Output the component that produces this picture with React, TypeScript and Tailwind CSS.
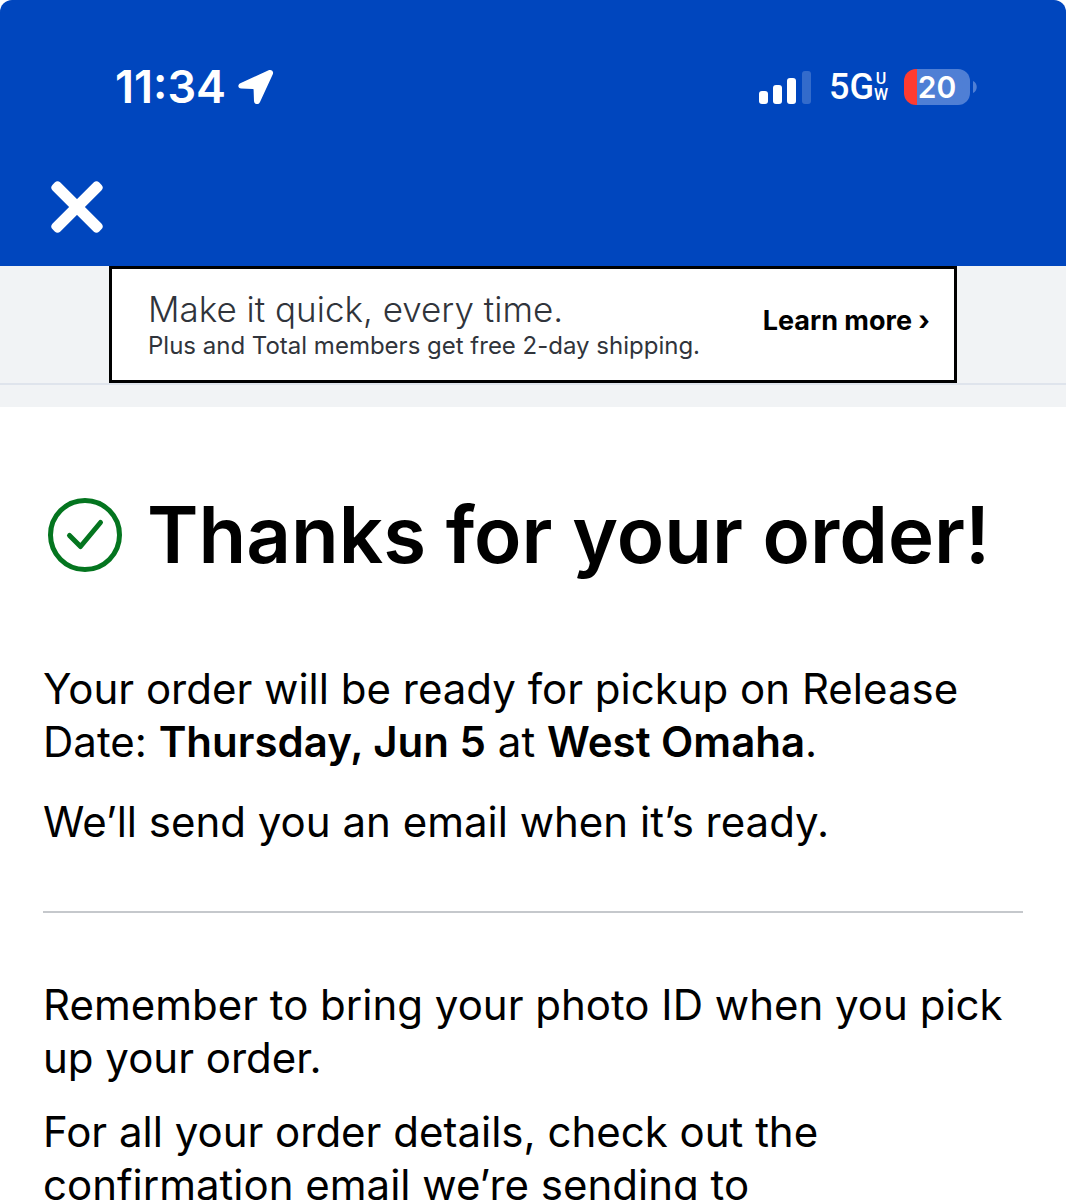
const signalBars = [
  { x: 0, height: 13, opacity: 1 },
  { x: 14, height: 19, opacity: 1 },
  { x: 28, height: 26, opacity: 1 },
  { x: 43, height: 33, opacity: 0.2 },
];

function StatusBar() {
  return (
    <div className="flex items-center justify-between pt-16 pl-[115px] pr-[89px] text-white">
      <div className="flex items-center gap-3">
        <span className="text-[45px] leading-[46px] font-semibold">11:34</span>
        {/* Location arrow */}
        <svg viewBox="0 0 36 36" className="w-9 h-9" fill="currentColor" aria-hidden="true">
          <path d="M30.6 1.2 2.3 14.2C-.6 15.6-.2 19.4 3.2 19.6l11.6.3c.6 0 .8.2.8.8l.4 11.2c.2 3.7 4.5 4.3 6 1L34.8 5.2c1.2-2.8-1.4-5.2-4.2-4Z" />
        </svg>
      </div>

      <div className="flex items-center">
        <svg viewBox="0 0 52 33" className="w-[52px] h-[33px]" fill="currentColor" aria-hidden="true">
          {signalBars.map((bar) => (
            <rect key={bar.x} x={bar.x} y={33 - bar.height} width="9" height={bar.height} rx="3" opacity={bar.opacity} />
          ))}
        </svg>
        <div className="flex items-center ml-[18px] font-['Roboto',sans-serif] font-medium">
          <span className="text-4xl leading-[46px]">5G</span>
          <span className="flex flex-col items-center text-base leading-4">
            <span>U</span>
            <span>W</span>
          </span>
        </div>
        {/* Battery */}
        <div className="flex items-center gap-[3px] ml-4">
          <div className="w-[66px] h-9 rounded-xl bg-gradient-to-r from-[#ff3b30] from-[20%] to-[#4f7fd5] to-[20%] flex items-center justify-center text-[30px] leading-9 font-semibold">
            20
          </div>
          <svg viewBox="0 0 4 12" className="w-1 h-3" fill="#4f7fd5" aria-hidden="true">
            <path d="M0 0c5 2 5 10 0 12Z" />
          </svg>
        </div>
      </div>
    </div>
  );
}

function MemberBanner() {
  return (
    <div className="bg-[#f1f3f5]">
      <div className="px-[109px] border-b-2 border-[#dfe4ec]">
        <div className="flex items-start justify-between bg-white border-3 border-black h-[117px] pt-5 pl-9 pr-6">
          <div className="text-[#30343b]">
            <p className="text-[35px] leading-[41px] font-light">Make it quick, every time.</p>
            <p className="text-2xl leading-8">Plus and Total members get free 2-day shipping.</p>
          </div>
          <a href="#" className="mt-4 text-[27px] leading-8 font-bold text-black">
            Learn more ›
          </a>
        </div>
      </div>
      <div className="h-[22px]"></div>
    </div>
  );
}

export default function App() {
  return (
    <div className="h-screen overflow-hidden bg-white text-black font-['Inter',sans-serif]">
      <header className="h-[266px] bg-[#0046be] rounded-t-xl">
        <StatusBar />
        <button type="button" aria-label="Close" className="block mt-[71px] ml-[51px] text-white cursor-pointer">
          <svg viewBox="0 0 52 52" className="w-[52px] h-[52px]" fill="currentColor">
            <rect x="-7" y="20.5" width="66" height="11" rx="4" transform="rotate(45 26 26)" />
            <rect x="-7" y="20.5" width="66" height="11" rx="4" transform="rotate(-45 26 26)" />
          </svg>
        </button>
      </header>

      <MemberBanner />

      <main className="px-[43px] text-[42px] leading-[53px]">
        {/* Order confirmation */}
        <div className="flex items-center gap-6 pt-[79px] pl-1">
          <svg viewBox="0 0 76 76" className="w-[76px] h-[76px] shrink-0" fill="none" stroke="#04751f" strokeWidth="5" aria-hidden="true">
            <circle cx="38" cy="38" r="34.5" />
            <path d="M22.5 38.5 33.5 49.5 53.5 25.5" strokeLinecap="round" strokeLinejoin="round" />
          </svg>
          <h1 className="text-[78px] leading-[98px] font-semibold whitespace-nowrap">Thanks for your order!</h1>
        </div>

        <div className="flex flex-col gap-[27px] pt-[78px] pb-[63px] border-b-2 border-[#c5c8cc]">
          <p>
            Your order will be ready for pickup on Release Date: <strong className="font-semibold">Thursday, Jun 5</strong> at{' '}
            <strong className="font-semibold">West Omaha</strong>.
          </p>
          <p>We’ll send you an email when it’s ready.</p>
        </div>

        <div className="flex flex-col gap-[21px] pt-[65px]">
          <p>Remember to bring your photo ID when you pick up your order.</p>
          <p>For all your order details, check out the confirmation email we’re sending to</p>
        </div>
      </main>
    </div>
  );
}
